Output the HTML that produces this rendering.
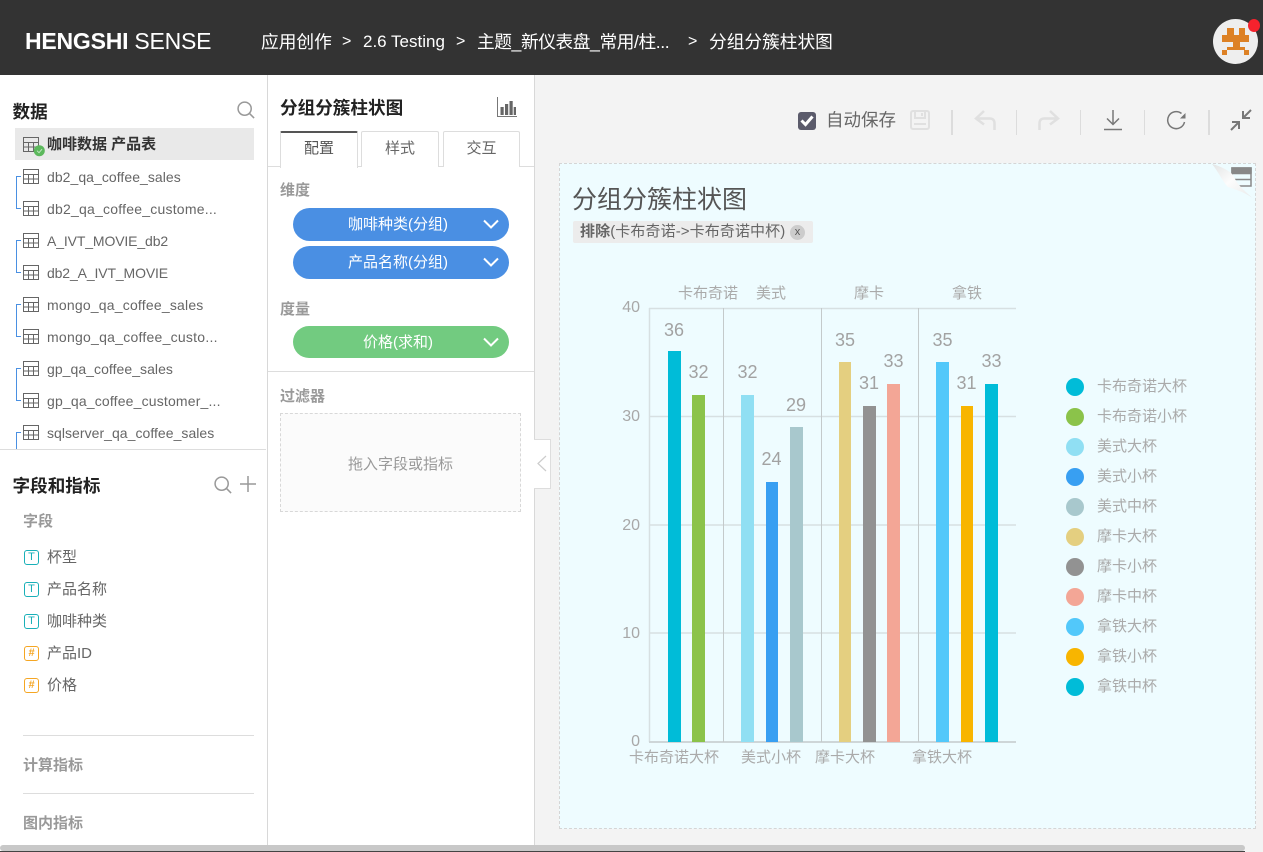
<!DOCTYPE html>
<html lang="zh"><head><meta charset="utf-8"><title>HENGSHI SENSE</title>
<style>
*{box-sizing:border-box}
html,body{margin:0;padding:0;width:1263px;height:852px;overflow:hidden;background:#f3f3f3;font-family:"Liberation Sans","Noto Sans CJK SC",sans-serif;color:#666}
.a{position:absolute}
.t{position:absolute;white-space:nowrap;line-height:20px}
.h{color:#222;font-size:17.6px;font-weight:bold}
.g{color:#666;font-size:15px}
.l{color:#666;font-size:14px}
.sub{color:#999;font-size:15px;font-weight:bold}
.w{color:#fff;font-size:17.7px;line-height:24px}
.pill{position:absolute;left:293px;width:216px;height:33px;border-radius:17px;color:#fff;font-size:15px;line-height:33px;text-align:center}
.pill svg{position:absolute;left:190px;top:11px}
.pill span{position:absolute;left:0;width:210px;text-align:center}
.tab{position:absolute;top:131px;height:36px;border:1px solid #ddd;border-bottom:none;background:#fff;text-align:center;font-size:15px;line-height:33px;color:#666;border-radius:2px 2px 0 0}
.fi{position:absolute;left:24px;width:15px;height:15px;border-radius:3px;border:1.5px solid #19b0b8;color:#19b0b8;font-size:11px;line-height:12px;text-align:center}
.fi.o{border-color:#f5a623;color:#f5a623;font-weight:bold}
.dl{color:#a2a2a2;font-size:18px}
.axl{color:#aaa;font-size:15px}
.yl{color:#a8a8a8;font-size:16px;text-align:right;width:30px;left:610px}
.lg{color:#aaa;font-size:15px;left:1097px}
.dot{position:absolute;left:1066px;width:18px;height:18px;border-radius:50%}
.bar{position:absolute;width:12.5px}
.tick{position:absolute;top:110px;height:25px;width:1px;background:#dcdcdc}
</style></head>
<body>
<!-- header -->
<div class="a" style="left:0;top:0;width:1263px;height:75px;background:#333"></div>
<div class="t" style="left:25px;top:28px;color:#fff;font-size:23px;line-height:26px;font-weight:bold;letter-spacing:-.22px">HENGSHI <span style="font-weight:normal">SENSE</span></div>
<div class="t w" style="left:261px;top:30px">应用创作</div>
<div class="t w" style="left:342px;top:30px;font-size:16px">&gt;</div>
<div class="t w" style="left:363px;top:30px;font-size:17px">2.6 Testing</div>
<div class="t w" style="left:456px;top:30px;font-size:16px">&gt;</div>
<div class="t w" style="left:477px;top:30px;letter-spacing:-.42px">主题_新仪表盘_常用/柱...</div>
<div class="t w" style="left:688px;top:30px;font-size:16px">&gt;</div>
<div class="t w" style="left:709px;top:30px">分组分簇柱状图</div>
<div class="a" style="left:1213px;top:19px;width:45px;height:45px;border-radius:50%;background:#eee"></div>
<svg class="a" style="left:1222px;top:28px" width="27" height="27" viewBox="0 0 27 27"><path fill="#dd8125" d="M5 0h7v7h5V0h6v7h4v7H18v5h5v3H5v-3h6v-5H0V7h5zM0 22h5v5H0zM22 22h5v5h-5z"/></svg>
<div class="a" style="left:1248px;top:19px;width:12px;height:13px;border-radius:50%;background:#f5222d"></div>

<!-- left panel -->
<div class="a" style="left:0;top:75px;width:268px;height:777px;background:#fff;border-right:1px solid #d8d8d8"></div>
<div class="t h" style="left:12.500px;top:102px">数据</div>
<svg class="a" style="left:237px;top:101px" width="18" height="18" viewBox="0 0 20 20" fill="none" stroke="#999" stroke-width="1.700"><circle cx="8.500" cy="8.500" r="7.300"/><path d="M14 14l5 5"/></svg>
<div class="a" style="left:15px;top:128px;width:239px;height:32px;background:#e9e9e9"></div>
<div class="t" style="left:47px;top:135px;font-size:15px;font-weight:bold;color:#333">咖啡数据 产品表</div>
<div class="t l" style="left:47px;top:167px;letter-spacing:.05px">db2_qa_coffee_sales</div>
<div class="t l" style="left:47px;top:199px;letter-spacing:.22px">db2_qa_coffee_custome...</div>
<div class="t l" style="left:47px;top:231px;letter-spacing:-.13px">A_IVT_MOVIE_db2</div>
<div class="t l" style="left:47px;top:263px;letter-spacing:-.13px">db2_A_IVT_MOVIE</div>
<div class="t l" style="left:47px;top:295px;letter-spacing:.2px">mongo_qa_coffee_sales</div>
<div class="t l" style="left:47px;top:327px;letter-spacing:.25px">mongo_qa_coffee_custo...</div>
<div class="t l" style="left:47px;top:359px;letter-spacing:.05px">gp_qa_coffee_sales</div>
<div class="t l" style="left:47px;top:391px;letter-spacing:.17px">gp_qa_coffee_customer_...</div>
<div class="t l" style="left:47px;top:423px;letter-spacing:.04px">sqlserver_qa_coffee_sales</div>
<svg class="a" style="left:15px;top:129px" width="30" height="320" viewBox="0 0 30 320" fill="none">
<g stroke="#666" stroke-width="1"><path d="M9 8.500h14.500v14h-15v-14zM8.500 13.500h15M13.500 13.500v9M18.500 13.500v9M8.500 18h15"/>
<path d="M9 40.500h14.500v14h-15v-14zM8.500 45.500h15M13.500 45.500v9M18.500 45.500v9M8.500 50h15"/>
<path d="M9 72.500h14.500v14h-15v-14zM8.500 77.500h15M13.500 77.500v9M18.500 77.500v9M8.500 82h15"/>
<path d="M9 104.500h14.500v14h-15v-14zM8.500 109.500h15M13.500 109.500v9M18.500 109.500v9M8.500 114h15"/>
<path d="M9 136.500h14.500v14h-15v-14zM8.500 141.500h15M13.500 141.500v9M18.500 141.500v9M8.500 146h15"/>
<path d="M9 168.500h14.500v14h-15v-14zM8.500 173.500h15M13.500 173.500v9M18.500 173.500v9M8.500 178h15"/>
<path d="M9 200.500h14.500v14h-15v-14zM8.500 205.500h15M13.500 205.500v9M18.500 205.500v9M8.500 210h15"/>
<path d="M9 232.500h14.500v14h-15v-14zM8.500 237.500h15M13.500 237.500v9M18.500 237.500v9M8.500 242h15"/>
<path d="M9 264.500h14.500v14h-15v-14zM8.500 269.500h15M13.500 269.500v9M18.500 269.500v9M8.500 274h15"/>
<path d="M9 296.500h14.500v14h-15v-14zM8.500 301.500h15M13.500 301.500v9M18.500 301.500v9M8.500 306h15"/></g>
<g stroke="#4a90e2" stroke-width="1"><path d="M6 47.500H1.500v32H6M6 111.500H1.500v32H6M6 175.500H1.500v32H6M6 239.500H1.500v32H6M6 303.500H1.500V320"/></g>
<circle cx="24.300" cy="21.700" r="5.500" fill="#5cb85c"/><path d="M22 21.700l2 2 3-3.500" stroke="#bfe6bf" stroke-width="1"/>
</svg>
<div class="a" style="left:0;top:449px;width:266px;height:1px;background:#ddd"></div>
<div class="t h" style="left:12.500px;top:476px">字段和指标</div>
<svg class="a" style="left:214px;top:476px" width="18" height="18" viewBox="0 0 20 20" fill="none" stroke="#999" stroke-width="1.700"><circle cx="8.500" cy="8.500" r="7.300"/><path d="M14 14l5 5"/></svg>
<svg class="a" style="left:240px;top:476px" width="16" height="16" viewBox="0 0 16 16" fill="none" stroke="#999" stroke-width="1.500"><path d="M0 8h16M8 0v16"/></svg>
<div class="t sub" style="left:23px;top:512px">字段</div>
<div class="fi" style="top:550px">T</div><div class="t g" style="left:47px;top:548px">杯型</div>
<div class="fi" style="top:582px">T</div><div class="t g" style="left:47px;top:580px">产品名称</div>
<div class="fi" style="top:614px">T</div><div class="t g" style="left:47px;top:612px">咖啡种类</div>
<div class="fi o" style="top:646px">#</div><div class="t g" style="left:47px;top:644px">产品ID</div>
<div class="fi o" style="top:678px">#</div><div class="t g" style="left:47px;top:676px">价格</div>
<div class="a" style="left:23px;top:735px;width:231px;height:1px;background:#ddd"></div>
<div class="t sub" style="left:23px;top:756px">计算指标</div>
<div class="a" style="left:23px;top:793px;width:231px;height:1px;background:#ddd"></div>
<div class="t sub" style="left:23px;top:814px">图内指标</div>

<!-- config panel -->
<div class="a" style="left:268px;top:75px;width:267px;height:777px;background:#fff;border-right:1px solid #d8d8d8"></div>
<div class="t h" style="left:280px;top:98px">分组分簇柱状图</div>
<svg class="a" style="left:497px;top:97px" width="21" height="21" viewBox="0 0 21 21"><path d="M.500 0v19.500H20" fill="none" stroke="#777"/><path fill="#666" d="M3.500 10h3.200v8H3.500zM8 7h3.200v11H8zM12.500 4h3.200v14h-3.200zM16.700 10H19v8h-2.300z"/></svg>
<div class="a" style="left:268px;top:166px;width:266px;height:1px;background:#ddd"></div>
<div class="tab" style="left:280px;width:78px;border-top:2px solid #555;color:#555;height:37px;z-index:2;line-height:31px">配置</div>
<div class="tab" style="left:361px;width:78px">样式</div>
<div class="tab" style="left:443px;width:77px">交互</div>
<div class="t sub" style="left:280px;top:181px">维度</div>
<div class="pill" style="top:208px;background:#4a8fe3"><span>咖啡种类(分组)</span><svg width="16" height="10" viewBox="0 0 16 10" fill="none" stroke="#fff" stroke-width="2"><path d="M1 1.500l7 7 7-7"/></svg></div>
<div class="pill" style="top:246px;background:#4a8fe3"><span>产品名称(分组)</span><svg width="16" height="10" viewBox="0 0 16 10" fill="none" stroke="#fff" stroke-width="2"><path d="M1 1.500l7 7 7-7"/></svg></div>
<div class="t sub" style="left:280px;top:300px">度量</div>
<div class="pill" style="top:326px;height:32px;background:#72cb80"><span>价格(求和)</span><svg width="16" height="10" viewBox="0 0 16 10" fill="none" stroke="#fff" stroke-width="2"><path d="M1 1.500l7 7 7-7"/></svg></div>
<div class="a" style="left:268px;top:371px;width:266px;height:1px;background:#ddd"></div>
<div class="t sub" style="left:280px;top:387px">过滤器</div>
<div class="a" style="left:280px;top:413px;width:241px;height:99px;border:1px dashed #d8d8d8;background:#fbfbfb;text-align:center;line-height:101px;font-size:15px;color:#999">拖入字段或指标</div>
<div class="a" style="left:534px;top:439px;width:17px;height:50px;background:#fff;border:1px solid #ddd;border-left:none"></div>
<svg class="a" style="left:537px;top:455px" width="10" height="17" viewBox="0 0 10 17" fill="none" stroke="#ccc" stroke-width="1.200"><path d="M9 1L1 8.500 9 16"/></svg>

<!-- toolbar -->
<div class="a" style="left:798px;top:112px;width:18px;height:18px;border-radius:3px;background:#5b5b6b"></div>
<svg class="a" style="left:800px;top:114px" width="14" height="13" viewBox="0 0 14 13" fill="none" stroke="#fff" stroke-width="3"><path d="M1.500 6.500l4 4 7-8"/></svg>
<div class="t" style="left:826px;top:110px;font-size:17.500px;color:#666">自动保存</div>
<svg class="a" style="left:909px;top:109px" width="22" height="22" viewBox="0 0 22 22" fill="none" stroke="#e0e0e0" stroke-width="2"><rect x="2" y="2" width="18" height="18" rx="2"/><path d="M6 2v7h10V2M13 4v3M5 15h12"/></svg>
<div class="tick" style="left:951px;width:2px"></div><div class="tick" style="left:1016px"></div><div class="tick" style="left:1080px"></div><div class="tick" style="left:1144px"></div><div class="tick" style="left:1208px;width:2px"></div>
<svg class="a" style="left:973px;top:109px" width="24" height="22" viewBox="0 0 24 22" fill="none" stroke="#e0e0e0" stroke-width="2.500"><path d="M11 2L3 9.500l8 6M3 9.500h14c3 0 4.500 2 4.500 5V21"/></svg>
<svg class="a" style="left:1037px;top:109px" width="24" height="22" viewBox="0 0 24 22" fill="none" stroke="#e0e0e0" stroke-width="2.500"><path d="M13 2l8 7.500-8 6M21 9.500H7c-3 0-4.500 2-4.500 5V21"/></svg>
<svg class="a" style="left:1103px;top:109px" width="20" height="22" viewBox="0 0 20 22" fill="none" stroke="#777" stroke-width="1.500"><path d="M10 1v14M4 9.500l6 6 6-6M1 20.500h18"/></svg>
<svg class="a" style="left:1166px;top:110px" width="21" height="20" viewBox="0 0 21 20" fill="none" stroke="#777" stroke-width="1.500"><path d="M18.500 12a8.500 8.500 0 1 1-3-8.500"/><path d="M14 8.500h5.500V3z" fill="#777" stroke="none"/></svg>
<svg class="a" style="left:1230px;top:109px" width="22" height="22" viewBox="0 0 22 22" fill="none" stroke="#777" stroke-width="2"><path d="M21 1l-7.500 7.500M13 2v7h7M1 21l7.500-7.500M2 13h7v7"/></svg>

<!-- chart card -->
<div class="a" style="left:559px;top:163px;width:697px;height:666px;background:#eefcff;border:1px dashed #d5d5d5"></div>
<svg class="a" style="left:1231px;top:167px" width="21" height="20" viewBox="0 0 21 20" fill="none" stroke="#888" stroke-width="1.500"><rect x="1" y="1" width="19" height="18"/><path d="M1 6.500h19M1 12.500h19"/><path d="M1 1h19v5H1z" fill="#888"/></svg>
<svg class="a" style="left:1212px;top:163px" width="44" height="38" viewBox="0 0 44 38"><defs><linearGradient id="f" x1="0" y1="0" x2="1" y2="1"><stop offset="0" stop-color="#e2e4e4"/><stop offset=".45" stop-color="#fcfcfc"/><stop offset="1" stop-color="#e6e8e8"/></linearGradient></defs><path d="M0 1C8 3 18 8 21 12c3 6 5 11 22 25C35 30 25 27 16 24 10 18 6 8 0 1z" fill="url(#f)"/></svg>
<div class="t" style="left:572px;top:185px;font-size:25px;line-height:30px;color:#555">分组分簇柱状图</div>
<div class="a" style="left:573px;top:221px;width:240px;height:22px;background:#ececec;border-radius:2px"></div>
<div class="t" style="left:580px;top:222px;font-size:15px;color:#666;letter-spacing:.1px"><b>排除</b>(卡布奇诺-&gt;卡布奇诺中杯)</div>
<div class="a" style="left:790px;top:225px;width:15px;height:15px;border-radius:50%;background:#ccc;color:#555;font-size:11px;line-height:14px;text-align:center">x</div>

<svg class="a" style="left:600px;top:290px" width="430" height="470" viewBox="600 290 430 470">
<g stroke="#d7e0e2" stroke-width="1.500" fill="none"><path d="M649 308.500H1016M649 416.500H1016M649 525H1016M649 633H1016"/><path d="M649.500 308V742"/></g>
<path d="M649 742H1016" stroke="#ced6d8" stroke-width="2"/>
<g stroke="#c4cacb" stroke-width="1"><path d="M723.500 308V742M821.500 308V742M918.500 308V742"/></g>
</svg>
<div class="bar" style="left:668px;top:351px;height:391px;background:#00bcd8"></div>
<div class="bar" style="left:692px;top:395px;height:347px;background:#8bc34a"></div>
<div class="bar" style="left:741px;top:395px;height:347px;background:#90dff3"></div>
<div class="bar" style="left:765.500px;top:482px;height:260px;background:#389ff2"></div>
<div class="bar" style="left:790px;top:427px;height:315px;background:#a8c8cd"></div>
<div class="bar" style="left:838.500px;top:362px;height:380px;background:#e4cf80"></div>
<div class="bar" style="left:863px;top:406px;height:336px;background:#929292"></div>
<div class="bar" style="left:887px;top:384px;height:358px;background:#f3a696"></div>
<div class="bar" style="left:936px;top:362px;height:380px;background:#52c8fa"></div>
<div class="bar" style="left:960.500px;top:406px;height:336px;background:#f8b500"></div>
<div class="bar" style="left:985px;top:384px;height:358px;background:#00bcd8"></div>

<div class="t yl" style="top:298px">40</div><div class="t yl" style="top:407px">30</div><div class="t yl" style="top:516px">20</div><div class="t yl" style="top:624px">10</div><div class="t yl" style="top:732px">0</div>
<div class="t axl" style="left:678px;top:284px">卡布奇诺</div><div class="t axl" style="left:756px;top:284px">美式</div><div class="t axl" style="left:854px;top:284px">摩卡</div><div class="t axl" style="left:952px;top:284px">拿铁</div>
<div class="t axl" style="left:629px;top:748px">卡布奇诺大杯</div><div class="t axl" style="left:741px;top:748px">美式小杯</div><div class="t axl" style="left:815px;top:748px">摩卡大杯</div><div class="t axl" style="left:912px;top:748px">拿铁大杯</div>
<div class="t dl" style="left:664px;top:320px">36</div><div class="t dl" style="left:688.500px;top:362px">32</div><div class="t dl" style="left:737.500px;top:362px">32</div><div class="t dl" style="left:761.500px;top:449px">24</div><div class="t dl" style="left:786px;top:395px">29</div><div class="t dl" style="left:835px;top:330px">35</div><div class="t dl" style="left:859px;top:373px">31</div><div class="t dl" style="left:883.500px;top:351px">33</div><div class="t dl" style="left:932.500px;top:330px">35</div><div class="t dl" style="left:956.500px;top:373px">31</div><div class="t dl" style="left:981.500px;top:351px">33</div>

<div class="dot" style="top:378px;background:#00bcd8"></div><div class="t lg" style="top:377px">卡布奇诺大杯</div>
<div class="dot" style="top:408px;background:#8bc34a"></div><div class="t lg" style="top:407px">卡布奇诺小杯</div>
<div class="dot" style="top:438px;background:#90dff3"></div><div class="t lg" style="top:437px">美式大杯</div>
<div class="dot" style="top:468px;background:#389ff2"></div><div class="t lg" style="top:467px">美式小杯</div>
<div class="dot" style="top:498px;background:#a8c8cd"></div><div class="t lg" style="top:497px">美式中杯</div>
<div class="dot" style="top:528px;background:#e4cf80"></div><div class="t lg" style="top:527px">摩卡大杯</div>
<div class="dot" style="top:558px;background:#929292"></div><div class="t lg" style="top:557px">摩卡小杯</div>
<div class="dot" style="top:588px;background:#f3a696"></div><div class="t lg" style="top:587px">摩卡中杯</div>
<div class="dot" style="top:618px;background:#52c8fa"></div><div class="t lg" style="top:617px">拿铁大杯</div>
<div class="dot" style="top:648px;background:#f8b500"></div><div class="t lg" style="top:647px">拿铁小杯</div>
<div class="dot" style="top:678px;background:#00bcd8"></div><div class="t lg" style="top:677px">拿铁中杯</div>

<!-- bottom scrollbar -->
<div class="a" style="left:0;top:851px;width:1263px;height:1px;background:#444"></div>
<div class="a" style="left:0;top:845px;width:1245px;height:6px;background:#c8c8c8;border-radius:3px"></div>
<div class="a" style="left:1245px;top:845px;width:18px;height:7px;background:#f3f3f3"></div>
</body></html>
